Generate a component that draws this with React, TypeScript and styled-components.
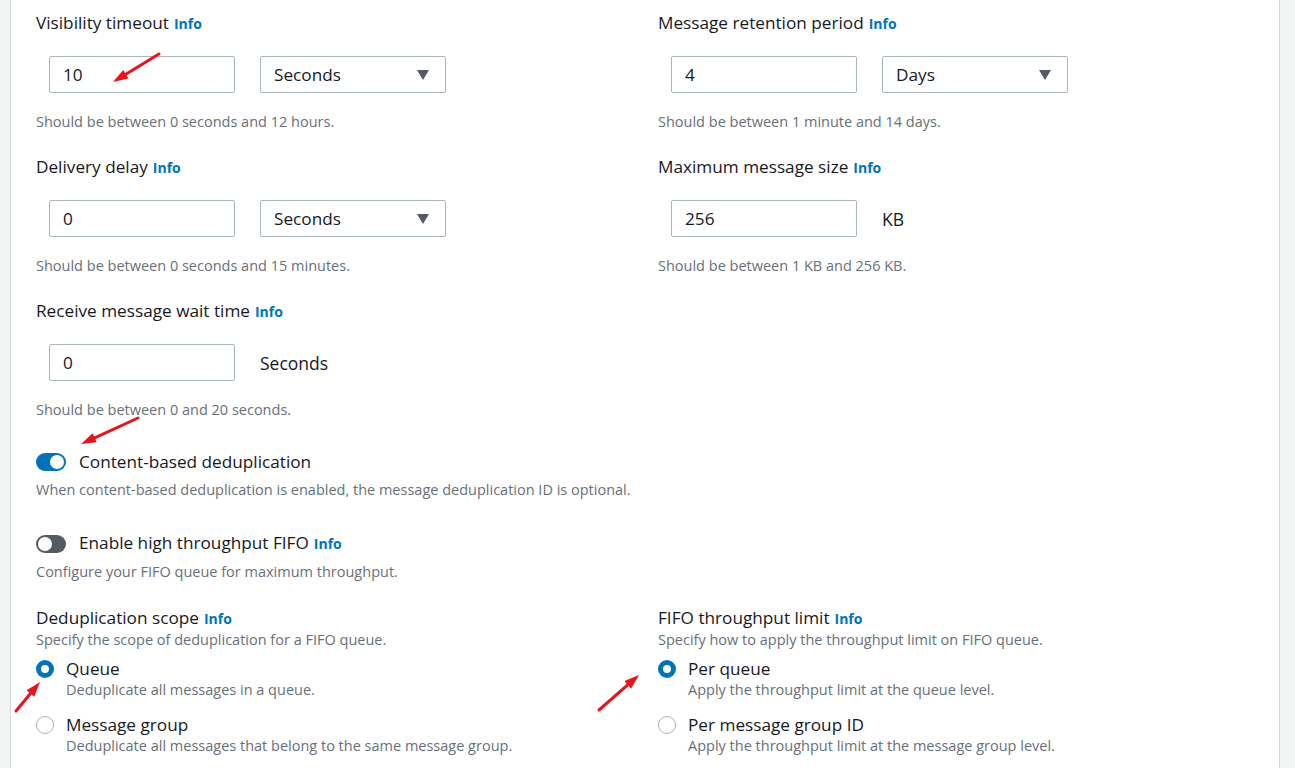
import styled, { createGlobalStyle } from "styled-components"

const GlobalStyle = createGlobalStyle`
body {
    margin: 0;
    background-color: #f2f3f3;
    font-family: "Open Sans", "Liberation Sans", Arial, sans-serif;
    color: #16191f;
}
* { box-sizing: border-box; }
`

const Page = styled.div`
position: relative;
width: 1295px;
height: 768px;
overflow: hidden;
padding-left: 10px;
`

const Panel = styled.main`
width: 1270px;
min-height: 768px;
background-color: #ffffff;
border-left: 1px solid #d5dbdb;
border-right: 1px solid #d5dbdb;
padding: 12px 0 0 25px;
display: flex;
flex-direction: column;
`

const FieldRow = styled.div<{ $after: number }>`
display: grid;
grid-template-columns: 622px 1fr;
margin-bottom: ${p => p.$after}px;
`

const Field = styled.div`
display: flex;
flex-direction: column;
`

const Label = styled.div`
font-size: 17.2px;
line-height: 22px;
color: #16191f;
`

const Info = styled.span`
font-size: 14px;
font-weight: 700;
color: #0073bb;
margin-left: 5px;
`

const Controls = styled.div`
display: flex;
align-items: center;
gap: 25px;
margin-top: 21px;
padding-left: 13px;
`

const TextInput = styled.div`
width: 186px;
height: 37px;
border: 1px solid #aab7b8;
border-radius: 2px;
padding: 0 13px;
display: flex;
align-items: center;
font-size: 17.2px;
`

const Select = styled(TextInput)`
justify-content: space-between;
padding-right: 16px;
`

const Caret = styled.span`
width: 0;
height: 0;
border-left: 6px solid transparent;
border-right: 6px solid transparent;
border-top: 10px solid #545b64;
`

const Unit = styled.span`
font-size: 17.5px;
`

const Help = styled.div`
margin-top: 19px;
font-size: 14.5px;
line-height: 20px;
color: #687078;
`

const ToggleBlock = styled.div<{ $after: number }>`
display: flex;
flex-direction: column;
gap: 7px;
margin-bottom: ${p => p.$after}px;
`

const ToggleRow = styled.div`
display: flex;
align-items: center;
gap: 13px;
font-size: 17.2px;
line-height: 22px;
`

const Toggle = styled.span<{ $on: boolean }>`
position: relative;
width: 30px;
height: 18px;
border-radius: 9px;
background-color: ${p => p.$on ? '#0073bb' : '#545b64'};

    &::after {
    content: "";
    position: absolute;
    top: 2px;
    left: ${p => p.$on ? '14px' : '2px'};
    width: 14px;
    height: 14px;
    border-radius: 50%;
    background-color: #ffffff;
    }
`

const Description = styled.div`
font-size: 14.5px;
line-height: 20px;
color: #687078;
`

const Option = styled.div<{ $first?: boolean }>`
display: grid;
grid-template-columns: 18px 1fr;
column-gap: 12px;
margin-top: ${p => p.$first ? 8 : 14}px;
`

const Radio = styled.span<{ $checked: boolean }>`
width: 18px;
height: 18px;
margin-top: 2px;
border-radius: 50%;
background-color: #ffffff;
border: ${p => p.$checked ? '5px solid #0073bb' : '1.5px solid #aab7b8'};
`

const OptionLabel = styled.div`
font-size: 17.2px;
line-height: 22px;
`

const OptionHint = styled(Description)`
grid-column: 2;
`

const Annotations = styled.svg`
position: absolute;
top: 0;
left: 0;
pointer-events: none;
`

type ArrowProps = { x1: number, y1: number, x2: number, y2: number }

function Arrow({ x1, y1, x2, y2 }: ArrowProps) {
    const len = Math.hypot(x2 - x1, y2 - y1)
    const ux = (x2 - x1) / len
    const uy = (y2 - y1) / len
    const bx = x2 - ux * 15
    const by = y2 - uy * 15
    const head = `${x2},${y2} ${bx - uy * 5},${by + ux * 5} ${bx + uy * 5},${by - ux * 5}`
    return (
        <g>
            <line x1={x1} y1={y1} x2={bx} y2={by} stroke="#e8141b" strokeWidth="3" strokeLinecap="round" />
            <polygon points={head} fill="#e8141b" />
        </g>
    )
}

export default function App() {
    return (
        <>
            <GlobalStyle />
            <Page>
                <Panel>
                    <FieldRow $after={24}>
                        <Field>
                            <Label>Visibility timeout<Info>Info</Info></Label>
                            <Controls>
                                <TextInput>10</TextInput>
                                <Select>Seconds<Caret /></Select>
                            </Controls>
                            <Help>Should be between 0 seconds and 12 hours.</Help>
                        </Field>
                        <Field>
                            <Label>Message retention period<Info>Info</Info></Label>
                            <Controls>
                                <TextInput>4</TextInput>
                                <Select>Days<Caret /></Select>
                            </Controls>
                            <Help>Should be between 1 minute and 14 days.</Help>
                        </Field>
                    </FieldRow>
                    <FieldRow $after={24}>
                        <Field>
                            <Label>Delivery delay<Info>Info</Info></Label>
                            <Controls>
                                <TextInput>0</TextInput>
                                <Select>Seconds<Caret /></Select>
                            </Controls>
                            <Help>Should be between 0 seconds and 15 minutes.</Help>
                        </Field>
                        <Field>
                            <Label>Maximum message size<Info>Info</Info></Label>
                            <Controls>
                                <TextInput>256</TextInput>
                                <Unit>KB</Unit>
                            </Controls>
                            <Help>Should be between 1 KB and 256 KB.</Help>
                        </Field>
                    </FieldRow>
                    <FieldRow $after={31}>
                        <Field>
                            <Label>Receive message wait time<Info>Info</Info></Label>
                            <Controls>
                                <TextInput>0</TextInput>
                                <Unit>Seconds</Unit>
                            </Controls>
                            <Help>Should be between 0 and 20 seconds.</Help>
                        </Field>
                    </FieldRow>

                    <ToggleBlock $after={32}>
                        <ToggleRow><Toggle $on={true} /><span>Content-based deduplication</span></ToggleRow>
                        <Description>When content-based deduplication is enabled, the message deduplication ID is optional.</Description>
                    </ToggleBlock>
                    <ToggleBlock $after={25}>
                        <ToggleRow><Toggle $on={false} /><span>Enable high throughput FIFO<Info>Info</Info></span></ToggleRow>
                        <Description>Configure your FIFO queue for maximum throughput.</Description>
                    </ToggleBlock>

                    <FieldRow $after={0}>
                        <Field>
                            <Label>Deduplication scope<Info>Info</Info></Label>
                            <Description>Specify the scope of deduplication for a FIFO queue.</Description>
                            <Option $first>
                                <Radio $checked={true} />
                                <OptionLabel>Queue</OptionLabel>
                                <OptionHint>Deduplicate all messages in a queue.</OptionHint>
                            </Option>
                            <Option>
                                <Radio $checked={false} />
                                <OptionLabel>Message group</OptionLabel>
                                <OptionHint>Deduplicate all messages that belong to the same message group.</OptionHint>
                            </Option>
                        </Field>
                        <Field>
                            <Label>FIFO throughput limit<Info>Info</Info></Label>
                            <Description>Specify how to apply the throughput limit on FIFO queue.</Description>
                            <Option $first>
                                <Radio $checked={true} />
                                <OptionLabel>Per queue</OptionLabel>
                                <OptionHint>Apply the throughput limit at the queue level.</OptionHint>
                            </Option>
                            <Option>
                                <Radio $checked={false} />
                                <OptionLabel>Per message group ID</OptionLabel>
                                <OptionHint>Apply the throughput limit at the message group level.</OptionHint>
                            </Option>
                        </Field>
                    </FieldRow>
                </Panel>

                <Annotations width="1295" height="768" viewBox="0 0 1295 768">
                    <Arrow x1={159} y1={54} x2={113} y2={82} />
                    <Arrow x1={138} y1={418} x2={81} y2={444} />
                    <Arrow x1={16} y1={711} x2={40} y2={682} />
                    <Arrow x1={599} y1={710} x2={639} y2={675} />
                </Annotations>
            </Page>
        </>
    )
}
